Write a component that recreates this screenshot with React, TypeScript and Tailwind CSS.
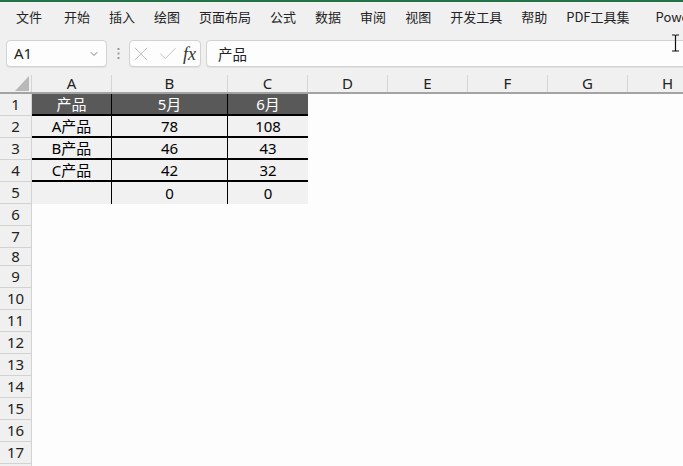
import { ChevronDown, X, Check } from "lucide-react"

const menus = ["开始", "插入", "绘图", "页面布局", "公式", "数据", "审阅", "视图", "开发工具", "帮助", "PDF工具集"]

const cols = [
  { label: "A", w: "w-[80px]" },
  { label: "B", w: "w-[116px]" },
  { label: "C", w: "w-[80px]" },
  { label: "D", w: "w-[80px]" },
  { label: "E", w: "w-[80px]" },
  { label: "F", w: "w-[80px]" },
  { label: "G", w: "w-[80px]" },
  { label: "H", w: "w-[80px]" },
]

const table = [
  ["产品", "5月", "6月"],
  ["A产品", "78", "108"],
  ["B产品", "46", "43"],
  ["C产品", "42", "32"],
  ["", "0", "0"],
]

const rowNums = Array.from({ length: 18 }, (_, i) => i + 1)

function TableCells({ row }: { row: number }) {
  const cells = table[row - 1]
  const isHead = row === 1
  const hasBottom = row < 5
  return (
    <>
      {cells.map((text, i) => (
        <div
          key={i}
          className={[
            "flex h-full shrink-0 items-center justify-center",
            i === 1 ? "w-[116px]" : "w-[80px]",
            i < 2 ? "border-r border-r-black" : "",
            hasBottom ? "border-b-2 border-b-black" : "",
            isHead ? "bg-[#595959] text-white" : "bg-[#f1f1f1] text-black",
          ].join(" ")}
        >
          {text}
        </div>
      ))}
    </>
  )
}

export default function App() {
  return (
    <div className="relative h-[466px] w-[683px] overflow-hidden bg-[#f0f0f0] font-['Noto_Sans','Noto_Sans_CJK_SC',sans-serif] text-[#222]">
      <div className="h-[2px] bg-[#217346]" />

      {/* ribbon tabs */}
      <div className="flex h-[30px] items-center whitespace-nowrap pl-[16px] font-['Noto_Sans_CJK_SC',sans-serif] text-[13px] text-[#242424]">
        <span className="mr-[22px] shrink-0">文件</span>
        <div className="flex shrink-0 gap-[19px]">
          {menus.map((m) => (
            <span key={m}>{m}</span>
          ))}
        </div>
        <span className="ml-[26px] shrink-0">Power Pivot</span>
      </div>

      {/* formula bar */}
      <div className="mt-[8px] flex h-[27px] items-stretch whitespace-nowrap pl-[6px]">
        <div className="flex w-[101px] shrink-0 items-center justify-between rounded-[4px] border border-[#d2d2d2] bg-[#fdfdfd] pl-[7px] pr-[6px] text-[15px] shadow-[0_1px_0_#e2e2e2]">
          <span>A1</span>
          <ChevronDown size={12} strokeWidth={1.5} className="text-[#555]" />
        </div>
        <div className="flex w-[22px] shrink-0 items-center justify-center">
          <svg width="3" height="11" viewBox="0 0 3 11">
            <rect x="0.5" y="0" width="2" height="2" fill="#9a9a9a" />
            <rect x="0.5" y="4.5" width="2" height="2" fill="#9a9a9a" />
            <rect x="0.5" y="9" width="2" height="2" fill="#9a9a9a" />
          </svg>
        </div>
        <div className="flex w-[72px] shrink-0 items-center rounded-[4px] border border-[#d2d2d2] bg-[#fdfdfd] shadow-[0_1px_0_#e2e2e2]">
          <X size={24} strokeWidth={0.8} className="-ml-[1px] text-[#b4b4b4]" />
          <Check size={22} strokeWidth={0.9} className="ml-[4px] text-[#b4b4b4]" />
          <span className="ml-[4px] font-['Liberation_Serif',serif] text-[18px] italic leading-none text-[#333]">fx</span>
        </div>
        <div className="ml-[5px] flex w-[520px] shrink-0 items-center rounded-[4px] border border-[#d2d2d2] bg-[#fdfdfd] pl-[11px] font-['Noto_Sans_CJK_SC',sans-serif] text-[14.5px] shadow-[0_1px_0_#e2e2e2]">
          产品
        </div>
      </div>

      {/* column headers */}
      <div className="mt-[8px] flex h-[19px] border-b-2 border-[#a3a3a3] text-[15px]">
        <div className="relative w-[32px] shrink-0 border-r border-[#d4d4d4]">
          <svg className="absolute bottom-[1px] right-[2px]" width="14" height="15" viewBox="0 0 14 15">
            <polygon points="14,0 14,15 0,15" fill="#b9b9b9" />
          </svg>
        </div>
        {cols.map((c) => (
          <div
            key={c.label}
            className={`${c.w} flex shrink-0 items-center justify-center border-r border-[#d4d4d4] leading-none`}
          >
            {c.label}
          </div>
        ))}
      </div>

      {/* rows */}
      <div className="bg-[#fdfdfd] font-['Noto_Sans','Noto_Sans_CJK_SC',sans-serif] text-[15px]">
        {rowNums.map((n) => (
          <div key={n} className={`flex ${n === 8 ? "h-[18px]" : "h-[22px]"}`}>
            <div className="flex w-[32px] shrink-0 items-center justify-center border-b border-r border-[#d2d2d2] bg-[#f0f0f0] leading-none text-[#222]">
              {n}
            </div>
            {n <= 5 && <TableCells row={n} />}
          </div>
        ))}
      </div>

      {/* text cursor */}
      <svg className="absolute left-[671px] top-[34px]" width="9" height="18" viewBox="0 0 9 18">
        <path d="M1 1h2.5c0.6 0 1 0.4 1 1v14c0 0.6 0.4 1 1 1H8M8 1H5.5c-0.6 0-1 0.4-1 1M4.5 16c0 0.6-0.4 1-1 1H1" fill="none" stroke="#111" strokeWidth="1.2" />
      </svg>
    </div>
  )
}
